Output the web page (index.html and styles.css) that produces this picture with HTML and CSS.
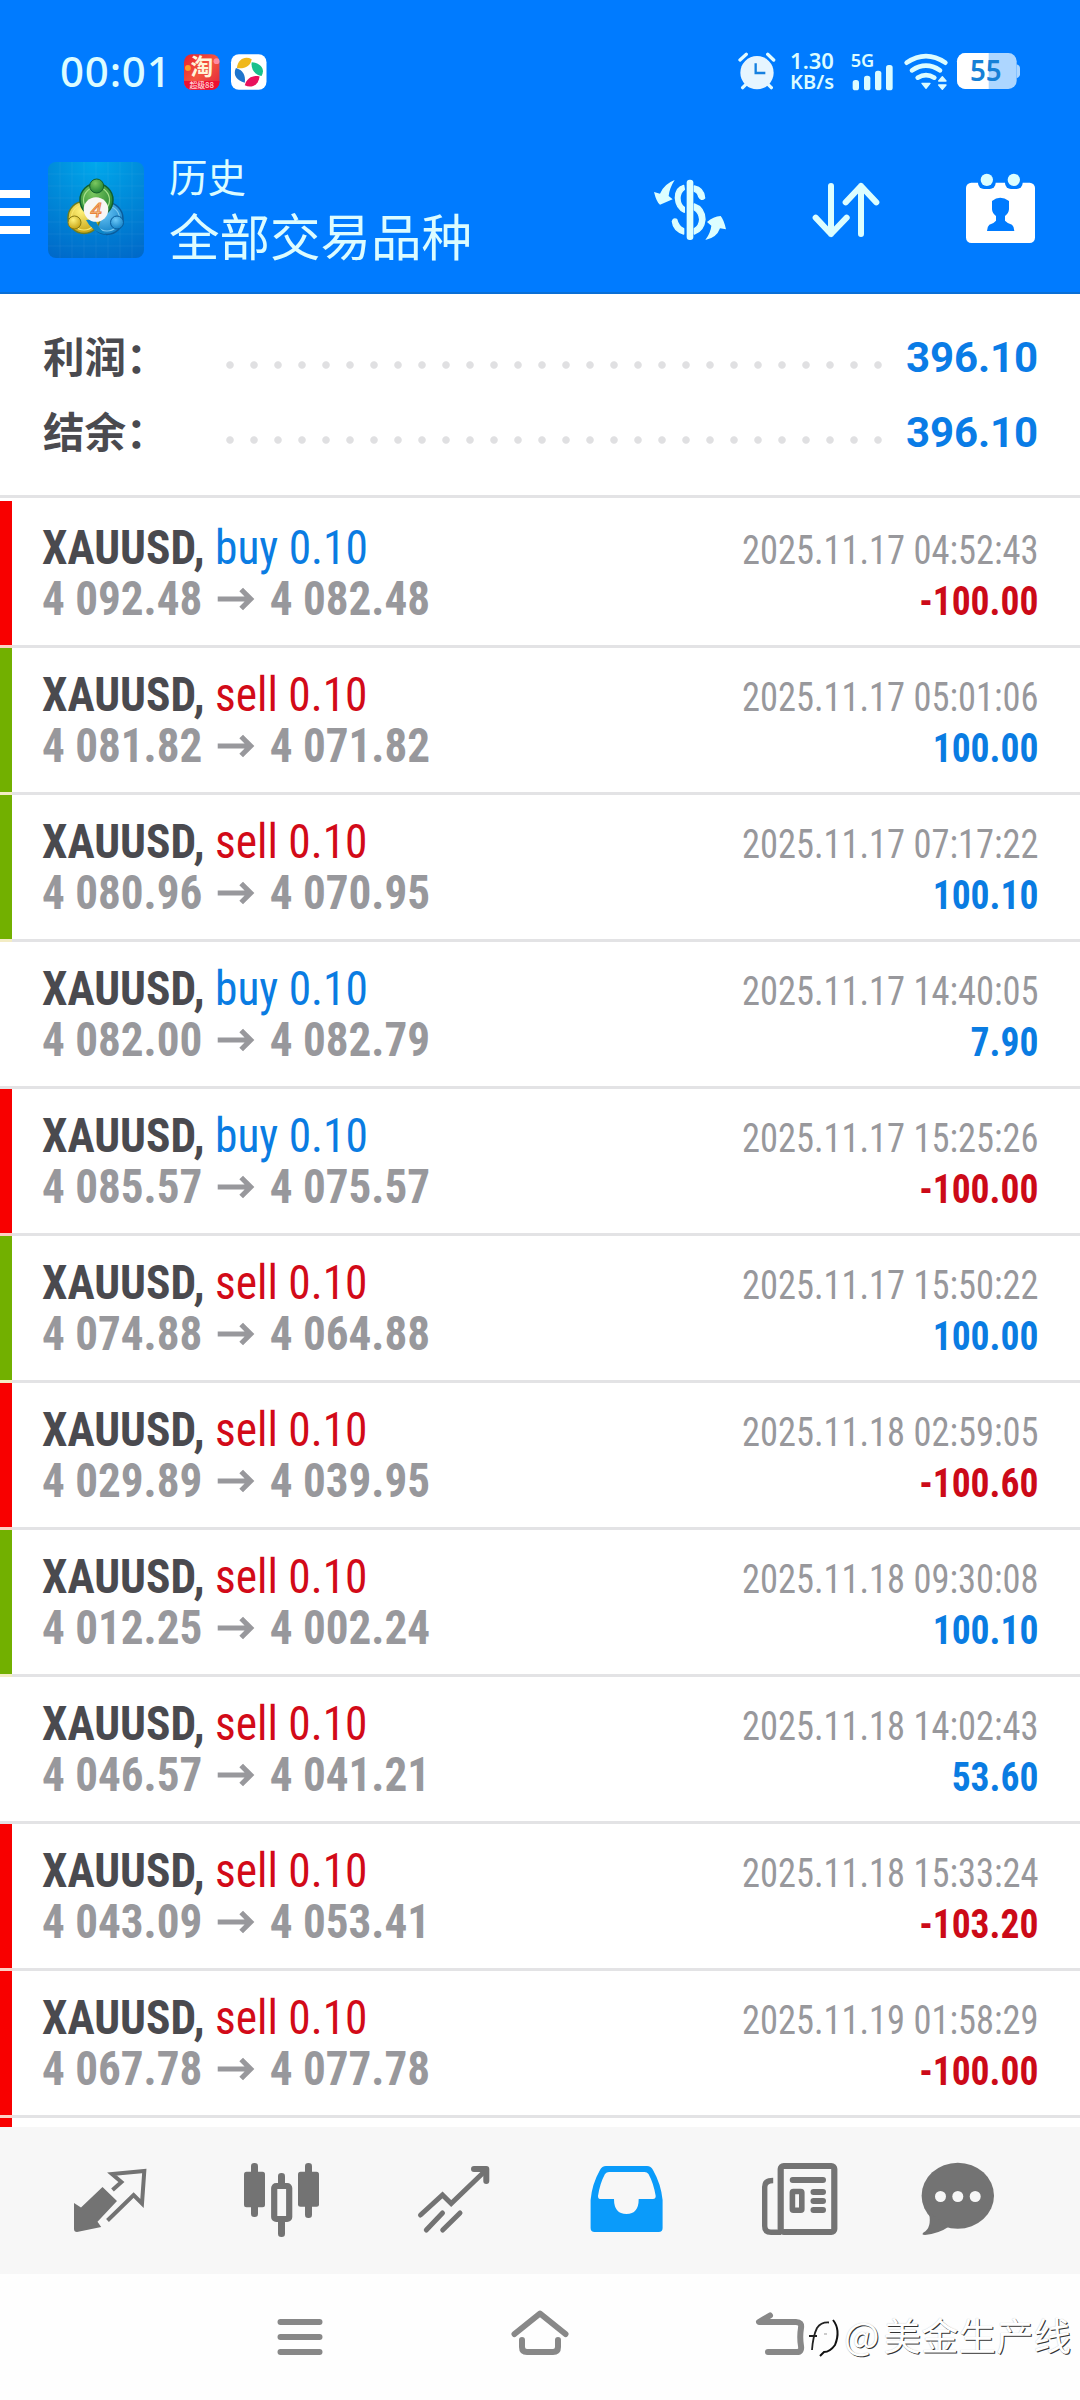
FILE: index.html
```html
<!DOCTYPE html>
<html lang="zh-CN">
<head>
<meta charset="utf-8">
<title>历史</title>
<link rel="stylesheet" href="styles.css">
</head>
<body>
<svg class="defs" width="0" height="0" aria-hidden="true">
  <symbol id="arrow" viewBox="0 0 67.5 24" preserveAspectRatio="none">
    <path d="M15 12H48M38.500 2.500L48 12L38.500 21.500" fill="none" stroke="#98989c" stroke-width="5.2"/>
  </symbol>
</svg>
<div class="screen">
  <header class="header">
    <div class="status">
      <span class="clock">00:01</span>
      <svg class="app" viewBox="0 0 36 36">
        <defs><linearGradient id="tb" x1="0" y1="0" x2="1" y2="1"><stop offset="0" stop-color="#e8202c"/><stop offset=".5" stop-color="#f4553f"/><stop offset="1" stop-color="#e0203a"/></linearGradient></defs>
        <rect width="36" height="36" rx="8" fill="url(#tb)"/>
        <path d="M0 27H36V28a8 8 0 0 1-8 8H8a8 8 0 0 1-8-8Z" fill="#ee1030"/>
        <circle cx="4" cy="14" r="3" fill="#ff9a2a"/><circle cx="33" cy="7" r="3" fill="#ff8aa0"/>
        <text x="18" y="21" text-anchor="middle" font-size="23" font-weight="700" fill="#fff4d8" class="cjk">淘</text>
        <text x="18" y="34" text-anchor="middle" font-size="8" font-weight="500" fill="#ffd0d0" class="cjk">超级88</text>
      </svg>
      <svg class="app" viewBox="0 0 36 36">
        <rect width="36" height="36" rx="8" fill="#fff"/>
        <path d="M6 14C7 5 14 1.500 21 5C20 12 14 15 6 14Z" fill="#f0b81c"/>
        <path d="M21 8C30 9 35 15 31 22C24 21 20 15 21 8Z" fill="#18c08c"/>
        <path d="M29 22.500C28 31 21 35 14 31.500C16 24 22 21 29 22.500Z" fill="#e8105c"/>
        <path d="M14 29C6 27 1.500 21 5 14C12 16 15 21 14 29Z" fill="#1e74cc"/>
      </svg>
      <div class="status-right">
        <svg class="alarm" viewBox="410 63 120 126">
          <g stroke="#e2fbff" stroke-width="10" stroke-linecap="round"><path d="M419 90L438 73M502 73L520 90M427 173L440 160M500 160L513 173"/></g>
          <circle cx="470" cy="128" r="50" fill="#e6f5ff"/>
          <path d="M466 100V129H495" fill="none" stroke="#1580e0" stroke-width="7"/>
        </svg>
        <div class="speed"><span class="rate">1.30</span><span class="unit">KB/s</span></div>
        <svg class="signal" viewBox="750 63 132 126" fill="#dcfcff">
          <text x="752" y="111" font-size="52" font-weight="600" textLength="71" lengthAdjust="spacingAndGlyphs" class="noto">5G</text>
          <rect x="758" y="150" width="19" height="31" rx="8"/><rect x="792" y="137" width="19" height="44" rx="8"/><rect x="825" y="122" width="19" height="59" rx="8"/><rect x="858" y="105" width="20" height="76" rx="8"/>
        </svg>
        <svg class="wifi" viewBox="905 63 141 126">
          <g fill="none" stroke="#dcfcff" stroke-width="14" stroke-linecap="round"><path d="M919 98Q977 59 1035 98M935 121Q977 93 1019 121M952 143Q977 128 1002 143"/></g>
          <path d="M965 160H989L977 175ZM1015 153H1037L1026 140ZM1015 165H1037L1026 178Z" fill="#dcfcff" stroke="#dcfcff" stroke-width="4" stroke-linejoin="round"/>
        </svg>
        <svg class="battery" viewBox="1068 63 195 126">
          <rect x="1071" y="69" width="179" height="108" rx="25" fill="#add6ff"/>
          <path d="M1166 69H1096a25 25 0 0 0-25 25V152a25 25 0 0 0 25 25H1166Z" fill="#fff"/>
          <path d="M1250 103q10 3 10 12v18q0 8-10 12Z" fill="#add6ff"/>
          <text x="1110" y="153" font-size="85" font-weight="600" textLength="95" lengthAdjust="spacingAndGlyphs" fill="#1680d6" class="noto">55</text>
        </svg>
      </div>
    </div>
    <div class="toolbar">
      <div class="menu"><i></i><i></i><i></i></div>
      <svg class="logo" viewBox="0 0 96 96">
        <defs>
          <radialGradient id="lb" cx=".5" cy="0" r="1.1"><stop offset="0" stop-color="#00a8ec"/><stop offset=".5" stop-color="#0088d8"/><stop offset="1" stop-color="#0068c8"/></radialGradient>
          <radialGradient id="gg" cx=".4" cy=".3" r=".8"><stop offset="0" stop-color="#7cc860"/><stop offset="1" stop-color="#167a2c"/></radialGradient>
          <radialGradient id="gy" cx=".4" cy=".3" r=".8"><stop offset="0" stop-color="#fff27a"/><stop offset="1" stop-color="#c09a08"/></radialGradient>
          <radialGradient id="gb" cx=".4" cy=".3" r=".8"><stop offset="0" stop-color="#6cc8f8"/><stop offset="1" stop-color="#0878c0"/></radialGradient>
        </defs>
        <rect width="96" height="96" rx="8" fill="url(#lb)"/>
        <path d="M12 0V96M24 0V96M36 0V96M48 0V96M60 0V96M72 0V96M84 0V96M0 12H96M0 24H96M0 36H96M0 48H96M0 60H96M0 72H96M0 84H96" stroke="#fff" stroke-opacity=".05"/>
        <circle cx="59" cy="56.500" r="16" fill="url(#gb)" stroke="#0a5c9c" stroke-width="1.500"/>
        <circle cx="59" cy="56.500" r="12.500" fill="none" stroke="#7cc8ee" stroke-width="1.200"/>
        <circle cx="36" cy="55.500" r="16" fill="url(#gy)" stroke="#6c7c20" stroke-width="1.500"/>
        <circle cx="36" cy="55.500" r="12.500" fill="none" stroke="#f8e870" stroke-width="1.200"/>
        <circle cx="48.500" cy="38" r="16.500" fill="url(#gg)" stroke="#0f6030" stroke-width="1.500"/>
        <circle cx="48.500" cy="38" r="13" fill="none" stroke="#a6e08c" stroke-width="1.200"/>
        <path d="M38 58Q44 70 58 72.500Q50 66 47 57Z" fill="#0a86c8"/>
        <circle cx="48.700" cy="24" r="7" fill="url(#gg)" stroke="#14602c"/>
        <circle cx="26.500" cy="60.500" r="6.500" fill="url(#gy)" stroke="#8a7c14"/>
        <circle cx="69" cy="60.500" r="6.500" fill="url(#gb)" stroke="#0a5c9c"/>
        <circle cx="48" cy="47.500" r="12.300" fill="#f8f6f4"/>
        <text x="48" y="54.500" text-anchor="middle" font-size="20" font-style="italic" fill="#fbd9a0" stroke="#e8823c" stroke-width="1" class="noto">4</text>
      </svg>
      <div class="titles"><div class="subtitle">历史</div><div class="title">全部交易品种</div></div>
      <div class="actions">
        <svg viewBox="150 405 270 270"><g transform="translate(150 420)">
          <rect x="110" y="29" width="20" height="181" rx="9" fill="#dcfeff"/>
          <path d="M101 46Q76 52 76 84Q78 116 103 127V112Q90 104 90 84Q91 66 103 58ZM133 48Q162 54 164 84Q154 94 146 80Q144 68 133 64ZM133 102Q163 112 165 148Q162 182 133 192V176Q148 168 149 148Q147 128 133 120ZM67 154Q70 144 80 148Q85 168 101 176V192Q70 182 67 154Z" fill="#dcfeff" stroke="#dcfeff" stroke-width="4" stroke-linejoin="round"/>
          <path d="M12 66L30 71Q42 42 74 30Q58 55 56 78L68 88L30 104Q20 98 12 66ZM166 210Q182 188 184 167L171 156Q190 140 212 138Q222 150 228 178L210 175Q200 204 166 210Z" fill="#dcfeff"/>
        </g></svg>
        <svg viewBox="600 405 270 270"><path d="M693 468V612M647 563L693 612L740 563M783 612V468M737 517L783 468L829 517" fill="none" stroke="#dcfeff" stroke-width="18" stroke-linecap="round" stroke-linejoin="round"/></svg>
        <svg viewBox="1065 405 270 270">
          <rect x="1098" y="458" width="207" height="181" rx="16" fill="#fff"/>
          <rect x="1134" y="424" width="53" height="53" rx="18" fill="#007bff"/><rect x="1215" y="424" width="53" height="53" rx="18" fill="#007bff"/>
          <circle cx="1160.500" cy="449.500" r="18.500" fill="#dcfeff"/><circle cx="1241.500" cy="449.500" r="18.500" fill="#dcfeff"/>
          <path d="M1176 513Q1200 494 1227 513V538Q1226 550 1215 558V572Q1222 580 1236 584Q1243 590 1243 603H1161Q1161 590 1168 584Q1182 580 1188 572V558Q1177 550 1176 538Z" fill="#007bff"/>
        </svg>
      </div>
    </div>
  </header>

  <section class="summary">
    <div class="sum-row"><span class="label">利润：</span><span class="dots"></span><span class="total">396.10</span></div>
    <div class="sum-row"><span class="label">结余：</span><span class="dots"></span><span class="total">396.10</span></div>
  </section>

  <main class="deals">
    <article class="deal loss"><div class="bar"></div><div class="body"><div class="left"><div class="line1"><b>XAUUSD,</b> <span class="buy">buy 0.10</span></div><div class="line2">4 092.48<svg><use href="#arrow"/></svg>4 082.48</div></div><div class="right"><div class="date">2025.11.17 04:52:43</div><div class="amt neg">-100.00</div></div></div></article>
    <article class="deal win"><div class="bar"></div><div class="body"><div class="left"><div class="line1"><b>XAUUSD,</b> <span class="sell">sell 0.10</span></div><div class="line2">4 081.82<svg><use href="#arrow"/></svg>4 071.82</div></div><div class="right"><div class="date">2025.11.17 05:01:06</div><div class="amt">100.00</div></div></div></article>
    <article class="deal win"><div class="bar"></div><div class="body"><div class="left"><div class="line1"><b>XAUUSD,</b> <span class="sell">sell 0.10</span></div><div class="line2">4 080.96<svg><use href="#arrow"/></svg>4 070.95</div></div><div class="right"><div class="date">2025.11.17 07:17:22</div><div class="amt">100.10</div></div></div></article>
    <article class="deal"><div class="bar"></div><div class="body"><div class="left"><div class="line1"><b>XAUUSD,</b> <span class="buy">buy 0.10</span></div><div class="line2">4 082.00<svg><use href="#arrow"/></svg>4 082.79</div></div><div class="right"><div class="date">2025.11.17 14:40:05</div><div class="amt">7.90</div></div></div></article>
    <article class="deal loss"><div class="bar"></div><div class="body"><div class="left"><div class="line1"><b>XAUUSD,</b> <span class="buy">buy 0.10</span></div><div class="line2">4 085.57<svg><use href="#arrow"/></svg>4 075.57</div></div><div class="right"><div class="date">2025.11.17 15:25:26</div><div class="amt neg">-100.00</div></div></div></article>
    <article class="deal win"><div class="bar"></div><div class="body"><div class="left"><div class="line1"><b>XAUUSD,</b> <span class="sell">sell 0.10</span></div><div class="line2">4 074.88<svg><use href="#arrow"/></svg>4 064.88</div></div><div class="right"><div class="date">2025.11.17 15:50:22</div><div class="amt">100.00</div></div></div></article>
    <article class="deal loss"><div class="bar"></div><div class="body"><div class="left"><div class="line1"><b>XAUUSD,</b> <span class="sell">sell 0.10</span></div><div class="line2">4 029.89<svg><use href="#arrow"/></svg>4 039.95</div></div><div class="right"><div class="date">2025.11.18 02:59:05</div><div class="amt neg">-100.60</div></div></div></article>
    <article class="deal win"><div class="bar"></div><div class="body"><div class="left"><div class="line1"><b>XAUUSD,</b> <span class="sell">sell 0.10</span></div><div class="line2">4 012.25<svg><use href="#arrow"/></svg>4 002.24</div></div><div class="right"><div class="date">2025.11.18 09:30:08</div><div class="amt">100.10</div></div></div></article>
    <article class="deal"><div class="bar"></div><div class="body"><div class="left"><div class="line1"><b>XAUUSD,</b> <span class="sell">sell 0.10</span></div><div class="line2">4 046.57<svg><use href="#arrow"/></svg>4 041.21</div></div><div class="right"><div class="date">2025.11.18 14:02:43</div><div class="amt">53.60</div></div></div></article>
    <article class="deal loss"><div class="bar"></div><div class="body"><div class="left"><div class="line1"><b>XAUUSD,</b> <span class="sell">sell 0.10</span></div><div class="line2">4 043.09<svg><use href="#arrow"/></svg>4 053.41</div></div><div class="right"><div class="date">2025.11.18 15:33:24</div><div class="amt neg">-103.20</div></div></div></article>
    <article class="deal loss"><div class="bar"></div><div class="body"><div class="left"><div class="line1"><b>XAUUSD,</b> <span class="sell">sell 0.10</span></div><div class="line2">4 067.78<svg><use href="#arrow"/></svg>4 077.78</div></div><div class="right"><div class="date">2025.11.19 01:58:29</div><div class="amt neg">-100.00</div></div></div></article>
    <article class="deal loss"><div class="bar"></div></article>
  </main>

  <nav class="tabs">
    <svg viewBox="0 2127 180 147"><path d="M74 2203L81 2207.500L102.500 2187L117 2201L97.500 2221.700L101.200 2227L77 2232Q74 2232 74 2229Z" fill="#737373"/><path d="M112.500 2190L121.400 2182L112 2174L144.300 2171L142 2203.500L133.600 2195L107.500 2220.500" fill="none" stroke="#737373" stroke-width="4"/></svg>
    <svg viewBox="180 2127 180 147"><g fill="#737373"><rect x="244" y="2171.700" width="21" height="35.500" rx="2.500"/><rect x="251" y="2163" width="7" height="54" rx="3.300"/><rect x="298" y="2171.700" width="21" height="35" rx="2.500"/><rect x="305" y="2163" width="7" height="55" rx="3.300"/><rect x="278" y="2173" width="7" height="14" rx="3.300"/><rect x="278" y="2218" width="7" height="19" rx="3.300"/></g><rect x="274.200" y="2186" width="15" height="33" rx="2" fill="#f7f7f7" stroke="#737373" stroke-width="6.200"/></svg>
    <svg viewBox="360 2127 180 147"><path d="M420.500 2215L442.500 2195L451.200 2203.500L485 2171M426.300 2230L442.500 2213M442.700 2230L460 2213" fill="none" stroke="#737373" stroke-width="5" stroke-linecap="round"/><path d="M474 2169H486.300V2181" fill="none" stroke="#737373" stroke-width="6" stroke-linecap="round" stroke-linejoin="round"/></svg>
    <svg viewBox="540 2127 180 147"><path fill="#0a9bfa" fill-rule="evenodd" d="M590.600 2228V2200Q592 2184 600 2170Q602 2166 606 2166H647Q651 2166 653 2170Q661 2184 662.600 2200V2228Q662.600 2232 658.600 2232H594.600Q590.600 2232 590.600 2228ZM598 2196Q600 2183 605 2174Q606.500 2172 609 2172H644.500Q647 2172 648.500 2174Q653.500 2183 655.700 2196Q655.700 2199 653 2199H638.700Q638.700 2214 626.500 2214Q614 2214 614 2199H600Q598 2199 598 2196Z"/></svg>
    <svg viewBox="720 2127 180 147"><g fill="none" stroke="#737373"><rect x="780.700" y="2166" width="53.600" height="66" rx="3" stroke-width="6.200"/><path d="M773.200 2180.500Q764.700 2180.500 764.700 2187V2226Q764.700 2232.300 771 2232.300H781" stroke-width="5.400"/><path d="M792.700 2180H823M813.500 2192H823M813.500 2201H823M813.500 2210H823" stroke-width="6" stroke-linecap="round"/><rect x="792.400" y="2191.500" width="9.400" height="18.700" rx="1" stroke-width="5.600"/></g></svg>
    <svg viewBox="900 2127 180 147"><ellipse cx="957.800" cy="2195.700" rx="36.200" ry="33" fill="#737373"/><path d="M929 2213Q932 2228 923.500 2232.500Q921 2235 925 2235Q938 2234 950 2226Z" fill="#737373"/><g fill="#f7f7f7"><circle cx="940.500" cy="2196.500" r="5.500"/><circle cx="957.800" cy="2196.500" r="5.500"/><circle cx="975.200" cy="2196.500" r="5.500"/></g></svg>
  </nav>

  <footer class="sysnav">
    <svg viewBox="180 2274 240 126"><path d="M280.500 2322H319.500M280.500 2337H319.500M280.500 2352H319.500"/></svg>
    <svg viewBox="420 2274 240 126"><path d="M514.500 2334L540 2313.500L565.500 2334M522 2340V2347Q522 2352 527 2352H553Q558 2352 558 2347V2340"/></svg>
    <svg viewBox="660 2274 240 126"><path d="M770 2315.500L759 2322H796Q802 2322 801 2328Q799.500 2337 801 2346Q802 2352 797 2352H768"/></svg>
    <div class="watermark">
      <svg viewBox="0 0 36 44"><path d="M1 18H9M4 32Q5 18 9 10Q13 4 21 4.500" stroke="#222" stroke-width="1.800" fill="none"/><path d="M25 2Q33 12 27 27Q22 34 16 34L12 38" stroke="#111" stroke-width="2" fill="none"/><path d="M16 16h3" stroke="#999" fill="none"/></svg>
      <span class="at">@</span><span>美金生产线</span>
    </div>
  </footer>
</div>
</body>
</html>
```
FILE: styles.css
```css
* { box-sizing: border-box; }
body { margin: 0; background: #fff; font-family: "Roboto Condensed", Roboto, "Noto Sans CJK SC", sans-serif; }
svg { display: block; flex: none; }
.defs { position: absolute; }
.noto { font-family: "Noto Sans", sans-serif; }
.cjk { font-family: "Noto Sans CJK SC", sans-serif; }
.screen { width: 1080px; height: 2400px; display: flex; flex-direction: column; overflow: hidden; }

.header { height: 294px; flex: none; background: #007bff; border-bottom: 2px solid #0a6fd6; }
.status { height: 143px; display: flex; align-items: center; padding: 0 59px 0 60px; font-family: "Noto Sans", sans-serif; color: #dcfcff; }
.status svg { overflow: visible; }
.clock { width: 123.500px; font-size: 42px; line-height: 60px; font-weight: 500; letter-spacing: .8px; margin-top: -2px; }
.app { width: 35.500px; height: 36px; margin-right: 12px; }
.status-right { margin-left: auto; display: flex; align-items: center; }
.alarm { width: 40px; height: 42px; margin-right: 12.300px; }
.speed { width: 46px; margin: -2px 15px 0 0; display: flex; flex-direction: column; align-items: center; font-weight: 600; line-height: 21px; }
.rate { font-size: 22px; }
.unit { font-size: 20px; }
.signal { width: 44px; height: 42px; margin-right: 7.700px; }
.wifi { width: 47px; height: 42px; margin-right: 7.300px; }
.battery { width: 65px; height: 42px; }

.toolbar { height: 148px; display: flex; align-items: flex-start; padding-right: 35px; }
.menu { width: 30px; margin-top: 47px; display: flex; flex-direction: column; gap: 10px; }
.menu i { height: 8px; background: #fff; }
.logo { width: 96px; height: 96px; margin: 19px 0 0 18px; }
.titles { margin: 6px 0 0 25px; color: #dcfcff; font-family: "Noto Sans CJK SC", sans-serif; }
.subtitle { font-size: 38.500px; line-height: 52px; }
.title { font-size: 50.500px; line-height: 67px; }
.actions { margin: 22px 0 0 auto; display: flex; gap: 60px; }
.actions svg { width: 90px; height: 90px; }
.actions svg:nth-child(2) { margin-right: 5px; }

.summary { height: 204px; flex: none; padding: 26px 43px 0; border-bottom: 3px solid #e3e3e5; }
.sum-row { height: 75px; display: flex; align-items: center; }
.label { width: 175px; padding-bottom: 5px; font: 700 41.500px/60px "Noto Sans CJK SC", sans-serif; color: #4a4a4f; }
.dots { width: 672px; height: 8px; margin-top: 15px; background: radial-gradient(circle at 12px 4px, #e0e0e2 3.300px, transparent 4.200px) 0 0 / 24px 8px repeat-x; }
.total { margin-left: auto; margin-right: -1px; font: 700 42px/60px Roboto, sans-serif; letter-spacing: -.1px; color: #0a7ce6; }

.deals { height: 1629px; flex: none; padding-top: 3px; overflow: hidden; }
.deal { height: 147px; display: flex; }
.bar { width: 12px; border-bottom: 3px solid #e3e3e5; }
.loss .bar { background: #f80000; border-bottom-color: #fdd0c4; }
.win .bar { background: #72b000; border-bottom-color: #f3ecc4; }
.body { flex: 1; display: flex; justify-content: space-between; padding: 0 42px 0 30px; border-bottom: 3px solid #e3e3e5; white-space: nowrap; }
.left { padding-top: 21px; font-size: 48px; line-height: 51px; }
.line1 { color: #4a4a4f; transform: scaleX(.946); transform-origin: 0 0; }
.line2 { display: flex; align-items: center; font-weight: 700; color: #98989c; transform: scaleX(.94); transform-origin: 0 0; }
.line2 svg { width: 71.700px; height: 24px; }
.buy { color: #0a7ce2; }
.sell { color: #d20a18; }
.right { padding-top: 24px; font-size: 40px; line-height: 51px; text-align: right; }
.date { color: #98989c; transform: scaleX(.911); transform-origin: 100% 0; }
.amt { font-weight: 700; color: #0a7ce2; transform: scaleX(.938); transform-origin: 100% 0; }
.neg { color: #cc0a18; }

.tabs { height: 147px; flex: none; display: flex; background: #f7f7f7; }
.tabs svg { width: 180px; height: 147px; }

.sysnav { position: relative; height: 126px; display: flex; justify-content: center; background: #fefefe; }
.sysnav > svg { width: 240px; height: 126px; fill: none; stroke: #888; stroke-width: 6; stroke-linecap: round; stroke-linejoin: round; }
.watermark { position: absolute; right: 9px; top: 32px; display: flex; align-items: center; font: 400 37.500px/56px "Noto Sans CJK SC", sans-serif; color: #fff; text-shadow: 1px 1px 0 #333, 0 0 1px rgba(0, 0, 0, .25); }
.watermark svg { width: 36px; height: 44px; margin-top: 12px; }
.at { margin-right: 4px; }
```
